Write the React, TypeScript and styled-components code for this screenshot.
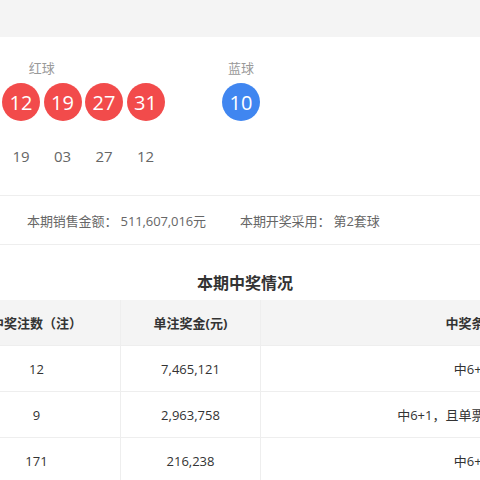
import React from "react";
import styled, { createGlobalStyle } from "styled-components";

const GlobalStyle = createGlobalStyle`
  html, body {
    margin: 0;
    padding: 0;
    background: #fff;
    overflow: hidden;
  }
  body {
    font-family: "Open Sans", "Noto Sans CJK SC", sans-serif;
    color: #333;
  }
`;

const TopBar = styled.div`
  height: 37px;
  background: #f4f4f4;
`;

const Wrapper = styled.div`
  margin-left: -193px;
  width: 876px;
`;

const DrawSection = styled.div`
  display: flex;
  padding: 22px 0 29px 112px;
  border-bottom: 1px solid #eee;
`;

const BallGroup = styled.div<{ $gap?: number }>`
  display: flex;
  flex-direction: column;
  align-items: center;
  margin-right: ${(p) => p.$gap ?? 0}px;
`;

const GroupLabel = styled.div`
  font-size: 13px;
  line-height: 18px;
  color: #999;
  margin-bottom: 6px;
`;

const BallRow = styled.div`
  display: flex;
  gap: 3.5px;
`;

const Ball = styled.div<{ $blue?: boolean }>`
  width: 38px;
  height: 38px;
  border-radius: 50%;
  background: ${(p) => (p.$blue ? "#4086f0" : "#f24b4b")};
  color: #fff;
  font-size: 20px;
  display: flex;
  align-items: center;
  justify-content: center;
`;

const OrderRow = styled.div`
  display: flex;
  gap: 3.5px;
  margin-top: 25px;
`;

const OrderNum = styled.div`
  width: 38px;
  text-align: center;
  font-size: 15px;
  line-height: 20px;
  color: #666;
`;

const SalesRow = styled.div`
  display: flex;
  align-items: center;
  height: 48px;
  padding-left: 220px;
  border-bottom: 1px solid #eee;
  font-size: 13px;
  color: #666;
`;

const SalesItem = styled.div`
  margin-right: 34px;
  white-space: nowrap;
  letter-spacing: -0.1px;
`;

const Title = styled.div`
  text-align: center;
  font-size: 16px;
  font-weight: bold;
  line-height: 22px;
  padding: 27px 0 6px;
  color: #333;
`;

const Table = styled.div`
  display: grid;
  grid-template-columns: 146px 168px 140px 422px;
  font-size: 13px;
`;

const Cell = styled.div<{ $head?: boolean }>`
  height: 46px;
  display: flex;
  align-items: center;
  justify-content: center;
  white-space: nowrap;
  border-right: 1px solid #eee;
  border-bottom: 1px solid #eee;
  box-sizing: border-box;
  background: ${(p) => (p.$head ? "#f4f4f4" : "#fff")};
  font-weight: ${(p) => (p.$head ? "bold" : "normal")};
  color: #333;
`;

const redBalls = ["03", "05", "12", "19", "27", "31"];
const order = ["31", "05", "19", "03", "27", "12"];

const head = ["奖级", "中奖注数（注）", "单注奖金(元)", "中奖条件"];
const rows = [
  ["一等奖", "12", "7,465,121", "中6+1"],
  ["一等奖", "9", "2,963,758", "中6+1，且单票金额≥20元"],
  ["二等奖", "171", "216,238", "中6+0"],
];

export default function App() {
  return (
    <>
      <GlobalStyle />
      <TopBar />
      <Wrapper>
        <DrawSection>
          <BallGroup $gap={57.5}>
            <GroupLabel>红球</GroupLabel>
            <BallRow>
              {redBalls.map((n) => (
                <Ball key={n}>{n}</Ball>
              ))}
            </BallRow>
            <OrderRow>
              {order.map((n) => (
                <OrderNum key={n}>{n}</OrderNum>
              ))}
            </OrderRow>
          </BallGroup>
          <BallGroup>
            <GroupLabel>蓝球</GroupLabel>
            <BallRow>
              <Ball $blue>10</Ball>
            </BallRow>
          </BallGroup>
        </DrawSection>
        <SalesRow>
          <SalesItem>本期销售金额： 511,607,016元</SalesItem>
          <SalesItem>本期开奖采用： 第2套球</SalesItem>
        </SalesRow>
        <Title>本期中奖情况</Title>
        <Table>
          {head.map((h) => (
            <Cell key={h} $head>
              {h}
            </Cell>
          ))}
          {rows.map((r, i) =>
            r.map((c, j) => <Cell key={`${i}-${j}`}>{c}</Cell>)
          )}
        </Table>
      </Wrapper>
    </>
  );
}
